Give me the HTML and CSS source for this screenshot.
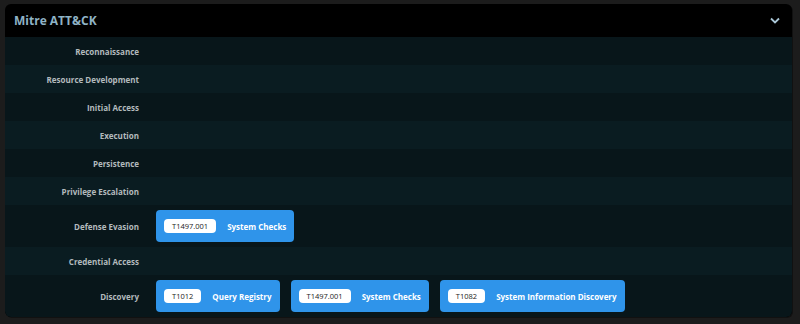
FILE: index.html
```html
<!DOCTYPE html>
<html lang="en">
<head>
    <meta charset="UTF-8">
    <title>Mitre ATT&amp;CK</title>
    <link rel="stylesheet" href="styles.css">
</head>
<body>
    <div class="card">
        <div class="card-head">
            <span class="title">Mitre ATT&amp;CK</span>
            <svg class="chev" width="10" height="7" viewBox="0 0 10 7">
                <path d="M1 1.5 L5 5.5 L9 1.5" fill="none" stroke="#a9c6d6" stroke-width="1.8"/>
            </svg>
        </div>
        <div class="tactics">
            <div class="row"><div class="label">Reconnaissance</div><div class="techs"></div></div>
            <div class="row"><div class="label">Resource Development</div><div class="techs"></div></div>
            <div class="row"><div class="label">Initial Access</div><div class="techs"></div></div>
            <div class="row"><div class="label">Execution</div><div class="techs"></div></div>
            <div class="row"><div class="label">Persistence</div><div class="techs"></div></div>
            <div class="row"><div class="label">Privilege Escalation</div><div class="techs"></div></div>
            <div class="row">
                <div class="label">Defense Evasion</div>
                <div class="techs">
                    <span class="tech"><span class="tid">T1497.001</span>System Checks</span>
                </div>
            </div>
            <div class="row"><div class="label">Credential Access</div><div class="techs"></div></div>
            <div class="row">
                <div class="label">Discovery</div>
                <div class="techs">
                    <span class="tech"><span class="tid">T1012</span>Query Registry</span>
                    <span class="tech"><span class="tid">T1497.001</span>System Checks</span>
                    <span class="tech"><span class="tid">T1082</span>System Information Discovery</span>
                </div>
            </div>
        </div>
    </div>
</body>
</html>
```

FILE: styles.css
```css
* {
    margin: 0;
    padding: 0;
    box-sizing: border-box;
}

body {
    background: #1c1c1c;
    padding: 4px 8px 7px 5px;
    font-family: "Open Sans", "Noto Sans", sans-serif;
}

.card {
    background: #000;
    border-radius: 6px;
    overflow: hidden;
    box-shadow: 1px 1px 0 #111;
}

.card-head {
    height: 33px;
    display: flex;
    align-items: center;
    justify-content: space-between;
    padding: 0 12px 0 9px;
}

.title {
    color: #8fb3c6;
    font-size: 12px;
    font-weight: 700;
}

.chev {
    display: block;
}

.row {
    display: flex;
    align-items: center;
    min-height: 28px;
}

.row:nth-child(odd) {
    background: #08161a;
}

.row:nth-child(even) {
    background: #0a1c21;
}

.label {
    width: 134px;
    flex: none;
    text-align: right;
    color: #b3babd;
    font-size: 8px;
    font-weight: 700;
}

.techs {
    display: flex;
    gap: 11px;
    padding-left: 17px;
}

.techs:not(:empty) {
    padding-top: 5px;
    padding-bottom: 5px;
}

.tech {
    display: flex;
    align-items: center;
    height: 32px;
    padding: 0 8px;
    background: #2f94ea;
    border-radius: 4px;
    color: #fff;
    font-size: 8px;
    font-weight: 700;
}

.tid {
    background: #fff;
    color: #222;
    font-weight: 400;
    font-size: 7.5px;
    border-radius: 4px;
    height: 14px;
    line-height: 14px;
    padding: 0 8px;
    margin-right: 11px;
}
```
